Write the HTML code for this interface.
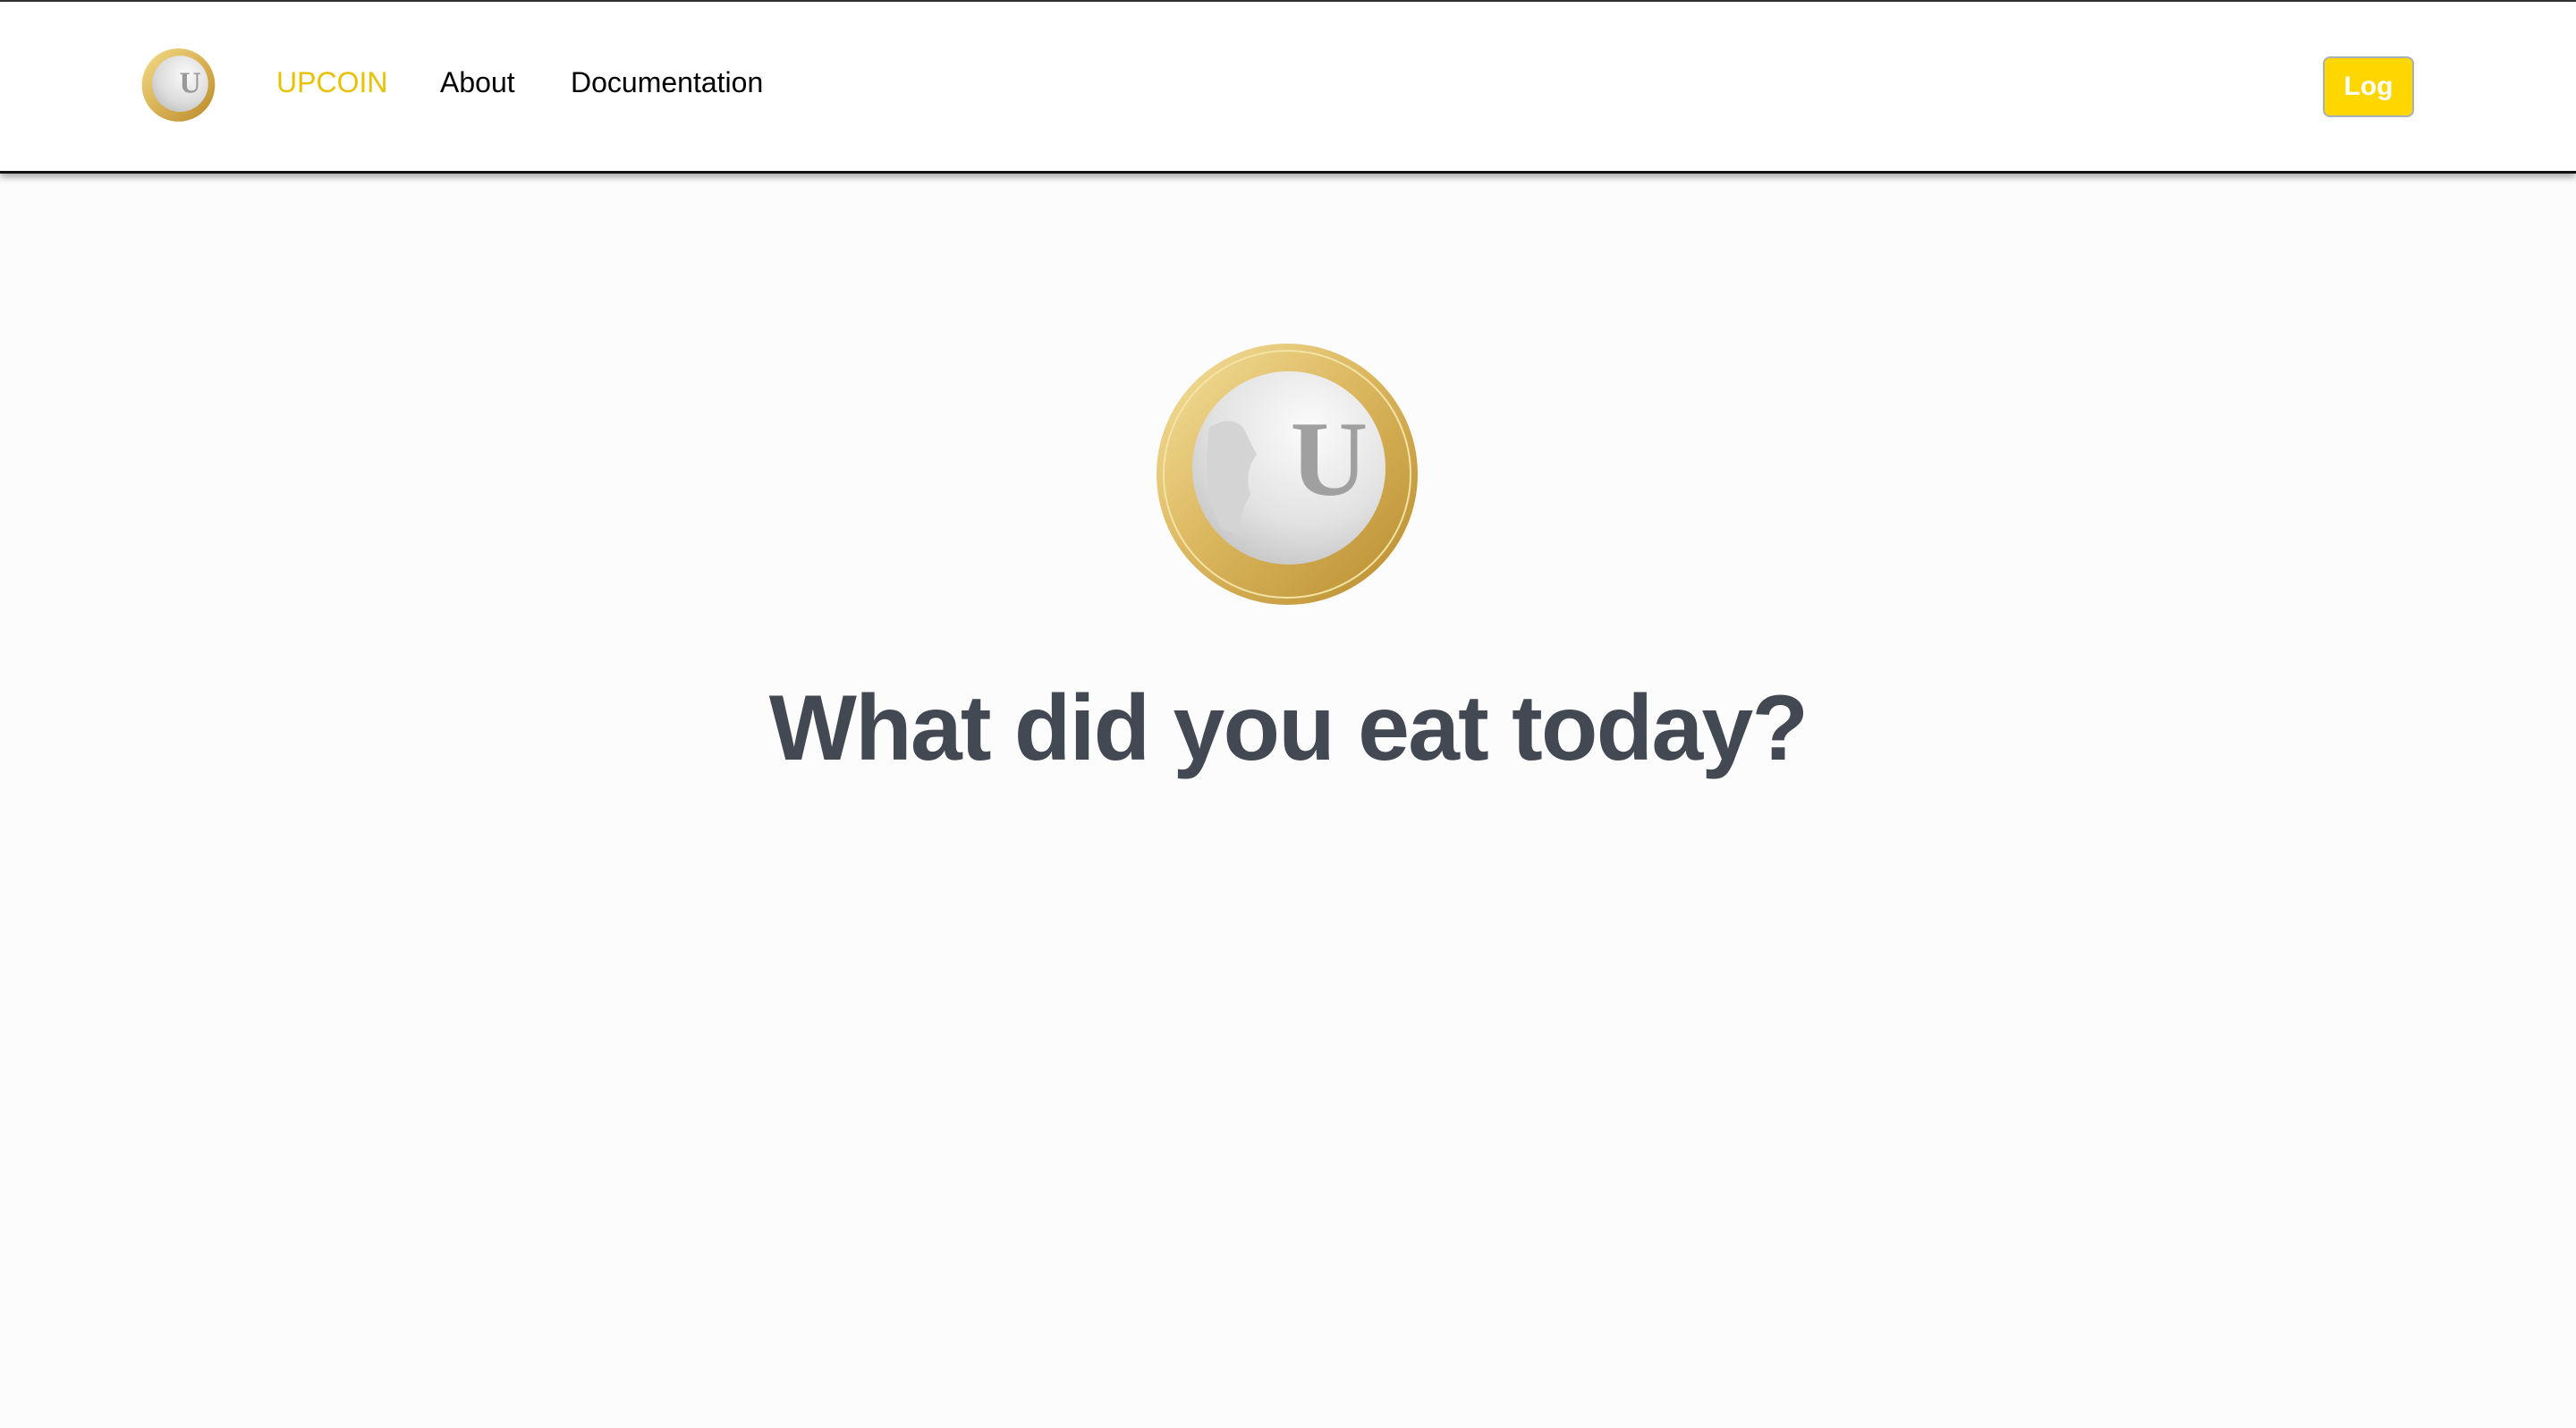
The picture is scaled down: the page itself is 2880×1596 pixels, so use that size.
<!DOCTYPE html>
<html><head><meta charset="utf-8"><style>
html,body{margin:0;padding:0;width:2880px;height:1596px;background:#fcfcfc;overflow:hidden;font-family:"Liberation Sans",Helvetica,Arial,sans-serif;}
.top{position:absolute;left:0;top:0;width:2880px;height:2px;background:#333;}
header{position:absolute;left:0;top:2px;width:2880px;height:189px;background:#fff;border-bottom:3px solid #111;box-shadow:0 4px 8px rgba(0,0,0,0.35);}
.nav{position:absolute;top:70px;font-size:32px;line-height:40px;color:#000;}
.btn{position:absolute;left:2597px;top:61px;width:98px;height:64px;background:#ffd600;border:2px solid #aab0bb;border-radius:8px;color:#fff;font-weight:bold;font-size:30px;line-height:64px;text-align:center;}
h1{position:absolute;left:0;width:2880px;top:752px;margin:0;text-align:center;font-size:104px;line-height:124px;font-weight:bold;color:#434953;letter-spacing:-1.8px;}
</style></head><body>
<div class="top"></div>
<header>
<svg style="position:absolute;left:158px;top:51px" width="84" height="84" viewBox="0 0 300 300">
<defs>
<linearGradient id="g1" x1="0" y1="0" x2="1" y2="1"><stop offset="0" stop-color="#f3dc8a"/><stop offset="0.5" stop-color="#d9b255"/><stop offset="1" stop-color="#b88b2b"/></linearGradient>
<radialGradient id="s1" cx="0.6" cy="0.35" r="0.7"><stop offset="0" stop-color="#fafafa"/><stop offset="0.7" stop-color="#dcdcdc"/><stop offset="1" stop-color="#c4c4c4"/></radialGradient>
</defs>
<circle cx="148" cy="150" r="146" fill="url(#g1)"/>
<circle cx="155" cy="145" r="112" fill="url(#s1)"/>
<text x="195" y="180" font-family="Liberation Serif,serif" font-weight="bold" font-size="120" fill="#999" text-anchor="middle">U</text>
</svg>
<div class="nav" style="left:309px;color:#e8c200">UPCOIN</div>
<div class="nav" style="left:492px">About</div>
<div class="nav" style="left:638px">Documentation</div>
<div class="btn">Log</div>
</header>
<svg style="position:absolute;left:1290px;top:378px" width="300" height="300" viewBox="0 0 300 300">
<defs>
<linearGradient id="g2" x1="0" y1="0" x2="1" y2="1"><stop offset="0" stop-color="#f5e2a0"/><stop offset="0.45" stop-color="#dcb860"/><stop offset="1" stop-color="#b98c2e"/></linearGradient>
<radialGradient id="s2" cx="0.6" cy="0.3" r="0.75"><stop offset="0" stop-color="#fbfbfb"/><stop offset="0.65" stop-color="#e2e2e2"/><stop offset="1" stop-color="#c6c6c6"/></radialGradient>
</defs>
<circle cx="149" cy="152" r="146" fill="url(#g2)"/>
<circle cx="149" cy="152" r="138" fill="none" stroke="#f3e3a5" stroke-width="2"/>
<circle cx="151" cy="145" r="108" fill="url(#s2)"/>
<path d="M62 100 Q85 85 100 100 L115 130 Q100 150 108 175 Q90 205 100 222 L75 212 Q52 170 62 100Z" fill="#d4d4d4"/>
<text x="196" y="175" font-family="Liberation Serif,serif" font-weight="bold" font-size="120" fill="#a0a0a0" text-anchor="middle">U</text>
</svg>
<h1>What did you eat today?</h1>
</body></html>
